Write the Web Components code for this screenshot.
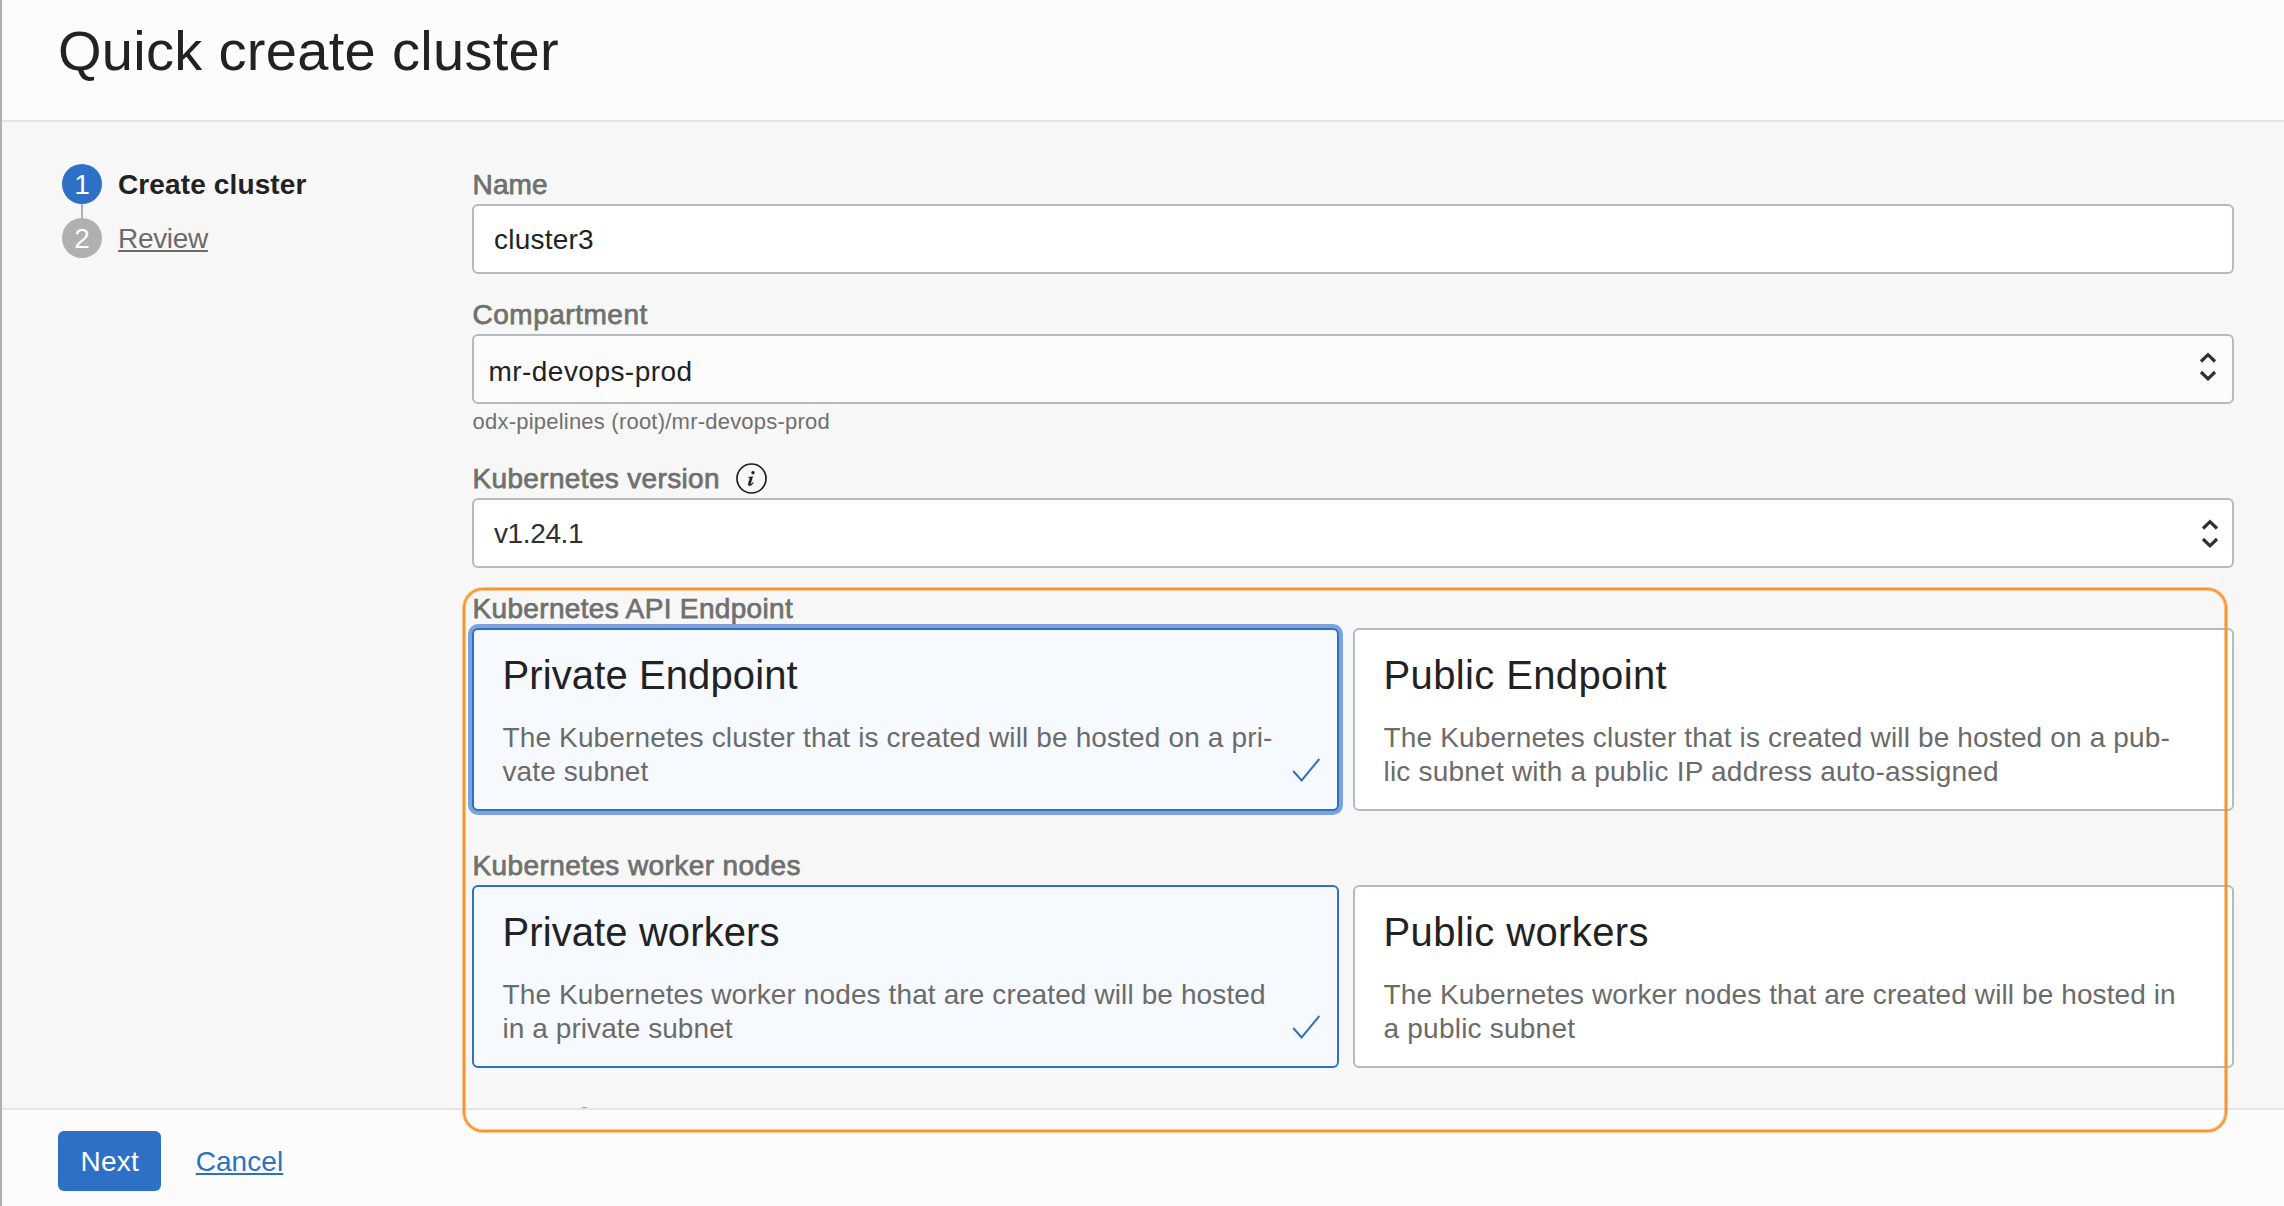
<!DOCTYPE html>
<html lang="en">
<head>
<meta charset="utf-8">
<title>Quick create cluster</title>
<style>
html,body{margin:0;height:100%;overflow:hidden}
body{font-family:"Liberation Sans",Arial,sans-serif;color:#222}
</style>
</head>
<body>
<cluster-wizard></cluster-wizard>
<script>
// Single line of text whose tracking is set so that the glyphs span `w` pixels.
class UiText extends HTMLElement {
  connectedCallback() {
    const size = +this.getAttribute('size') || 28;
    const bold = this.hasAttribute('bold');
    const text = this.textContent;
    const root = this.attachShadow({mode: 'open'});
    const ctx = document.createElement('canvas').getContext('2d');
    ctx.font = (bold ? 'bold ' : '') + size + 'px "Liberation Sans"';
    const m = ctx.measureText(text);
    const ink = m.actualBoundingBoxLeft + m.actualBoundingBoxRight;
    const track = (+this.getAttribute('w') - ink) / (text.length - 1);
    const lineHeight = Math.round(size * .905) + Math.round(size * .212);
    const bearing = !bold && /^[KNPRlai]/.test(text) ? 1 : 0;
    root.innerHTML = `<style>
      :host{display:block;white-space:pre;font-size:${size}px;line-height:${lineHeight}px;height:${lineHeight}px;
        font-weight:${bold ? 700 : 400};letter-spacing:${track.toFixed(3)}px}
      :host([medium]){color:#70706e;-webkit-text-stroke:.75px #70706e}
      span{margin-left:${(m.actualBoundingBoxLeft + bearing).toFixed(2)}px}
      :host([link]) span{text-decoration:underline;text-decoration-thickness:2px;text-underline-offset:2px;text-decoration-skip-ink:none}
    </style><span><slot></slot></span>`;
  }
}

class WizardStep extends HTMLElement {
  connectedCallback() {
    this.attachShadow({mode: 'open'}).innerHTML = `<style>
      :host{display:flex;align-items:center;gap:17px;height:40px}
      b{width:40px;height:40px;border-radius:50%;background:#b0b0b0;color:#fff;font:400 28px/41px "Liberation Sans",sans-serif;text-align:center}
      :host([current]) b{background:#2d70c6}
    </style><b>${this.getAttribute('n')}</b><slot></slot>`;
  }
}

class FieldBox extends HTMLElement {
  connectedCallback() {
    const select = this.hasAttribute('select');
    this.attachShadow({mode: 'open'}).innerHTML = `<style>
      :host{display:flex;justify-content:space-between;box-sizing:border-box;height:70px;border:2px solid #b4bac0;border-radius:6px;
        background:#fff;padding:18px 13px 0 21px}
      :host([tinted]){background:#fcfcfc;padding:20px 15px 0 15.5px}
      :host([select]:not([tinted])){color:#303030;padding-left:20px}
      svg{width:18px;height:32px;margin-top:-1px}
      :host([tinted]) svg{margin-top:-6px}
    </style><slot></slot>${select ? `<svg viewBox="0 0 18 32" fill="none" stroke="#303030" stroke-width="3.2"><path d="M2 11.5 9 4.7l7 6.8M2 22l7 6.8 7-6.800"/></svg>` : ''}`;
  }
}

class InfoIcon extends HTMLElement {
  connectedCallback() {
    this.attachShadow({mode: 'open'}).innerHTML = `<style>
      :host{display:block;width:31px;height:31px}svg{display:block}
    </style><svg width="31" height="31" viewBox="0 0 31 31"><circle cx="15.5" cy="15.5" r="14.5" fill="none" stroke="#1d1d1d" stroke-width="1.7"/>
      <path d="M16.6 8.2a1.500 1.500 0 1 1-.1 2.900 1.500 1.500 0 0 1 .1-2.900ZM12.500 14.200l4.300-.8-2.100 7.200c-.2.8.3.9 1 .2l1.300-1.500.6.5c-1.400 2.100-2.700 3-3.900 3-1.300 0-1.800-.9-1.400-2.300l1.500-5.100c.1-.4-.2-.6-1.400-.6z" fill="#1d1d1d" stroke="#1d1d1d" stroke-width=".3"/></svg>`;
  }
}

class OptionCard extends HTMLElement {
  connectedCallback() {
    this.attachShadow({mode: 'open'}).innerHTML = `<style>
      :host{display:flex;justify-content:space-between;align-items:flex-end;box-sizing:border-box;height:183px;border:2px solid #b4bac0;border-radius:6px;
        background:#fff;padding:23px 16px 22px 28.5px}
      :host([selected]){background:#f6f9fe;border-color:#2d70c6}
      :host([focused]){box-shadow:0 0 0 4px #7ca3dc}
      .copy{display:flex;flex-direction:column;align-self:flex-start}
      .title{margin:0 0 25px 2px}
      .desc{display:flex;flex-direction:column;gap:3px;color:#6b6b6b}
      svg{display:none;width:30px;height:26px;flex:none;margin-bottom:4px}
      :host([selected]) svg{display:block}
    </style><div class="copy"><div class="title"><slot name="title"></slot></div><div class="desc"><slot></slot></div></div>
    <svg viewBox="0 0 30 26" fill="none" stroke="#2d70c6" stroke-width="2"><path d="M2.200 14 10.600 23.400 28.300 2"/></svg>`;
  }
}

class ActionBar extends HTMLElement {
  connectedCallback() {
    this.attachShadow({mode: 'open'}).innerHTML = `<style>
      :host{display:flex;align-items:flex-start;gap:35px;box-sizing:border-box;height:98px;border-top:2px solid #e6e6e6;background:#fcfcfc;padding:21px 0 0 56px}
      .primary{display:flex;box-sizing:border-box;width:103px;height:60px;border-radius:6px;background:#2d70c6;color:#fff;padding:15px 0 0 23.500px}
      .link{padding:15px 0 0 .7px;color:#2d70c6}
    </style><div class="primary"><ui-text w="56.5">Next</ui-text></div><div class="link"><ui-text link w="85.3">Cancel</ui-text></div>`;
  }
}

class ClusterWizard extends HTMLElement {
  connectedCallback() {
    this.attachShadow({mode: 'open'}).innerHTML = `<style>
      :host{display:flex;flex-direction:column;position:relative;box-sizing:border-box;width:2284px;height:1206px;border-left:2px solid #b0b0b0;background:#f7f7f7;overflow:hidden}
      header{box-sizing:border-box;height:122px;border-bottom:2px solid #e4e4e4;background:#fcfcfc;padding:19px 0 0 58px}
      main{flex:1;display:flex;min-height:0;overflow:hidden}
      nav{width:410px;padding:42px 0 0 60px;box-sizing:border-box}
      .rail{width:2px;height:14px;background:#b0b0b0;margin-left:19px}
      .muted{color:#6b6b6b}
      .form{box-sizing:border-box;width:1822px;padding:47px 0 0 60px;display:flex;flex-direction:column}
      .label{display:flex;gap:16px;height:35px;padding-left:1.500px}
      field-box{margin-bottom:25px}
      .joined{margin-bottom:5px}
      .hint{margin-bottom:29px;color:#707070;padding-left:.5px}
      .cards{display:grid;grid-template-columns:867px 881px;gap:14px}
      .cards.first{margin-bottom:39px}
      .peek{width:5px;height:1px;background:#a0a0a0;margin:39px 0 0 110px;flex:none}
      .highlight{position:absolute;left:461px;top:588px;width:1760px;height:540px;border:2px solid #f7942b;border-radius:20px;box-shadow:0 0 0 1px #f7942b80,inset 0 0 0 1px #f7942b80}
    </style>
    <header><ui-text size="56" w="498">Quick create cluster</ui-text></header>
    <main>
      <nav>
        <wizard-step n="1" current><ui-text bold w="187.5">Create cluster</ui-text></wizard-step>
        <div class="rail"></div>
        <wizard-step n="2" class="muted"><ui-text link w="89">Review</ui-text></wizard-step>
      </nav>
      <div class="form">
        <div class="label"><ui-text medium w="72.6">Name</ui-text></div>
        <field-box><ui-text w="98">cluster3</ui-text></field-box>
        <div class="label"><ui-text medium w="174">Compartment</ui-text></div>
        <field-box class="joined" select tinted><ui-text w="201">mr-devops-prod</ui-text></field-box>
        <div class="hint"><ui-text size="22" w="356">odx-pipelines (root)/mr-devops-prod</ui-text></div>
        <div class="label"><ui-text medium w="243.5">Kubernetes version</ui-text><info-icon></info-icon></div>
        <field-box select><ui-text w="89">v1.24.1</ui-text></field-box>
        <div class="label"><ui-text medium w="320">Kubernetes API Endpoint</ui-text></div>
        <div class="cards first">
          <option-card selected focused><ui-text slot="title" size="40" w="292">Private Endpoint</ui-text>
            <ui-text w="769.5">The Kubernetes cluster that is created will be hosted on a pri-</ui-text><ui-text w="146">vate subnet</ui-text></option-card>
          <option-card><ui-text slot="title" size="40" w="280">Public Endpoint</ui-text>
            <ui-text w="786">The Kubernetes cluster that is created will be hosted on a pub-</ui-text><ui-text w="613">lic subnet with a public IP address auto-assigned</ui-text></option-card>
        </div>
        <div class="label"><ui-text medium w="325">Kubernetes worker nodes</ui-text></div>
        <div class="cards">
          <option-card selected><ui-text slot="title" size="40" w="273">Private workers</ui-text>
            <ui-text w="761.5">The Kubernetes worker nodes that are created will be hosted</ui-text><ui-text w="229.3">in a private subnet</ui-text></option-card>
          <option-card><ui-text slot="title" size="40" w="261">Public workers</ui-text>
            <ui-text w="790.6">The Kubernetes worker nodes that are created will be hosted in</ui-text><ui-text w="190.7">a public subnet</ui-text></option-card>
        </div>
        <div class="peek"></div>
      </div>
    </main>
    <action-bar></action-bar>
    <div class="highlight"></div>`;
  }
}

customElements.define('ui-text', UiText);
customElements.define('wizard-step', WizardStep);
customElements.define('field-box', FieldBox);
customElements.define('info-icon', InfoIcon);
customElements.define('option-card', OptionCard);
customElements.define('action-bar', ActionBar);
customElements.define('cluster-wizard', ClusterWizard);
</script>
</body>
</html>
